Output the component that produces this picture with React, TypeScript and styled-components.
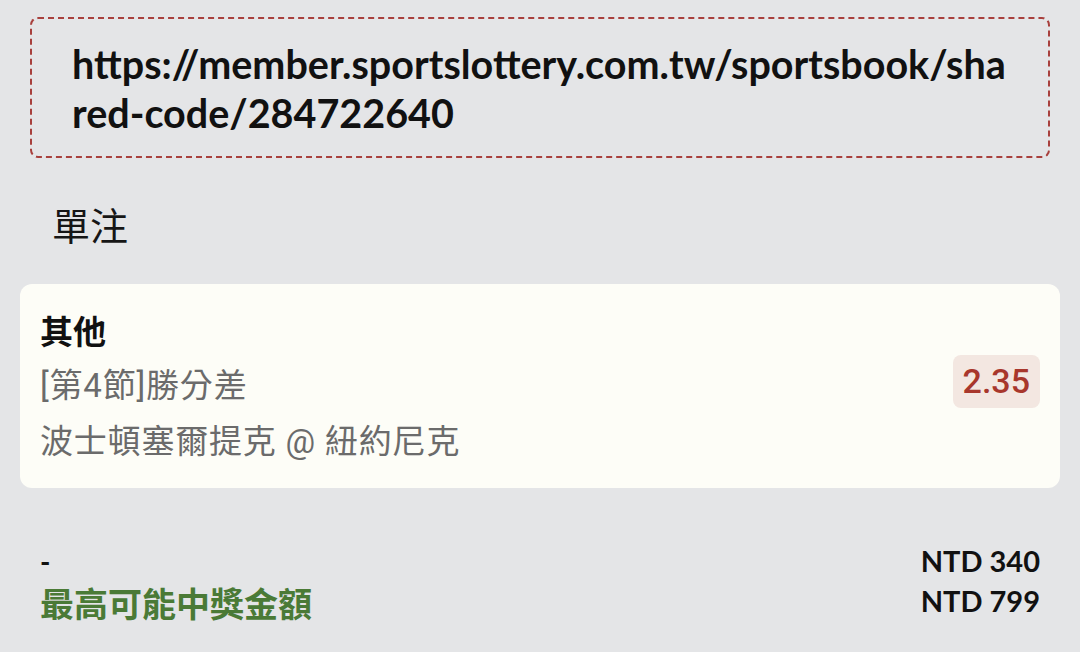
import styled, { createGlobalStyle } from "styled-components";

const GlobalStyle = createGlobalStyle`
  html, body {
    margin: 0;
    padding: 0;
    background: #e4e5e7;
  }
  body {
    font-family: "Noto Sans CJK TC", "Noto Sans", sans-serif;
  }
`;

const Page = styled.div`
  width: 1080px;
  height: 652px;
  overflow: hidden;
  background: #e4e5e7;
  padding: 17px 20px 0 20px;
  box-sizing: border-box;
  display: flex;
  flex-direction: column;
`;

const LinkBox = styled.div`
  margin: 0 10px;
  border: 2px dashed #a8403d;
  border-radius: 8px;
  padding: 20px 40px 0 40px;
  height: 141px;
  box-sizing: border-box;
`;

const LinkText = styled.div`
  font-family: Lato, "Liberation Sans", sans-serif;
  font-weight: 700;
  font-size: 39.5px;
  line-height: 49px;
  color: #111;
  word-break: break-all;
`;

const SectionTitle = styled.div`
  font-size: 38px;
  line-height: 40px;
  color: #161616;
  padding: 46px 0 0 32px;
  height: 80px;
  box-sizing: border-box;
`;

const Card = styled.div`
  margin-top: 46px;
  background: #fdfdf7;
  border-radius: 12px;
  padding: 14px 20px 14px 20px;
  height: 204px;
  box-sizing: border-box;
  display: flex;
  align-items: center;
  justify-content: space-between;
`;

const CardInfo = styled.div`
  display: flex;
  flex-direction: column;
`;

const Line = styled.div<{ $bold?: boolean }>`
  font-family: ${(p) =>
    p.$bold ? `"Noto Sans CJK TC"` : `Roboto, "Noto Sans CJK TC"`}, sans-serif;
  font-size: 33px;
  line-height: 56px;
  letter-spacing: ${(p) => (p.$bold ? 0 : 0.8)}px;
  font-weight: ${(p) => (p.$bold ? 700 : 400)};
  color: ${(p) => (p.$bold ? "#111" : "#6b6b6b")};
`;

const Odds = styled.div`
  background: #f3e7e1;
  border-radius: 8px;
  padding: 0 10px;
  height: 53px;
  margin-bottom: 10px;
  display: flex;
  align-items: center;
  font-family: Roboto, "Noto Sans", sans-serif;
  font-weight: 500;
  font-size: 34px;
  color: #a8372c;
`;

const Summary = styled.div`
  margin-top: 53px;
  padding: 0 20px;
  display: flex;
  justify-content: space-between;
`;

const Labels = styled.div`
  display: flex;
  flex-direction: column;
`;

const Dash = styled.div`
  font-family: Lato, "Liberation Sans", sans-serif;
  font-weight: 700;
  font-size: 28px;
  line-height: 40px;
  color: #111;
`;

const WinLabel = styled.div`
  font-size: 34px;
  font-weight: 700;
  line-height: 40px;
  color: #4a7a36;
  margin-top: 2px;
`;

const Amounts = styled.div`
  display: flex;
  flex-direction: column;
  align-items: flex-end;
`;

const Amount = styled.div`
  font-family: Lato, "Liberation Sans", sans-serif;
  font-weight: 700;
  font-size: 29px;
  line-height: 40px;
  color: #111;
`;

export default function App() {
  return (
    <Page>
      <GlobalStyle />
      <LinkBox>
        <LinkText>
          https://member.sportslottery.com.tw/sportsbook/shared-code/284722640
        </LinkText>
      </LinkBox>
      <SectionTitle>單注</SectionTitle>
      <Card>
        <CardInfo>
          <Line $bold>其他</Line>
          <Line>[第4節]勝分差</Line>
          <Line>波士頓塞爾提克 @ 紐約尼克</Line>
        </CardInfo>
        <Odds>2.35</Odds>
      </Card>
      <Summary>
        <Labels>
          <Dash>-</Dash>
          <WinLabel>最高可能中獎金額</WinLabel>
        </Labels>
        <Amounts>
          <Amount>NTD 340</Amount>
          <Amount>NTD 799</Amount>
        </Amounts>
      </Summary>
    </Page>
  );
}
